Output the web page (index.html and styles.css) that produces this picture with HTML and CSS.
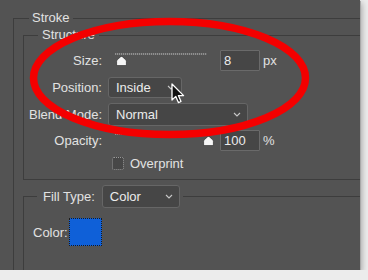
FILE: index.html
```html
<!DOCTYPE html>
<html lang="en">
<head>
    <meta charset="utf-8">
    <title>Layer Style - Stroke</title>
    <link rel="stylesheet" href="styles.css">
</head>
<body>
    <div class="window">
        <fieldset class="group group-stroke">
            <legend>Stroke</legend>
            <fieldset class="group group-structure">
                <legend>Structure</legend>
                <div class="row row-size">
                    <span class="row-label">Size:</span>
                    <div class="slider">
                        <div class="track"></div>
                        <svg class="thumb thumb-min" width="11" height="10" viewBox="0 0 11 10"><path d="M0.6 9.6 V5.4 Q0.6 4.5 1.4 3.7 L4.4 0.9 Q5.5 0 6.6 0.9 L9.6 3.7 Q10.4 4.5 10.4 5.4 V9.6 Z" fill="#f6f6f6" stroke="#2e2e2e" stroke-width="0.7"/></svg>
                    </div>
                    <div class="num">8</div>
                    <span class="unit">px</span>
                </div>
                <div class="row row-position">
                    <span class="row-label">Position:</span>
                    <div class="select select-short">
                        <span>Inside</span>
                        <svg class="chevron" width="8" height="5" viewBox="0 0 8 5"><path d="M1 1 L4 4 L7 1" fill="none" stroke="#c8c8c8" stroke-width="1.1"/></svg>
                    </div>
                </div>
                <div class="row row-blend">
                    <span class="row-label">Blend Mode:</span>
                    <div class="select select-wide">
                        <span>Normal</span>
                        <svg class="chevron" width="8" height="5" viewBox="0 0 8 5"><path d="M1 1 L4 4 L7 1" fill="none" stroke="#c8c8c8" stroke-width="1.1"/></svg>
                    </div>
                </div>
                <div class="row row-opacity">
                    <span class="row-label">Opacity:</span>
                    <div class="slider">
                        <div class="track"></div>
                        <svg class="thumb thumb-max" width="11" height="10" viewBox="0 0 11 10"><path d="M0.6 9.6 V5.4 Q0.6 4.5 1.4 3.7 L4.4 0.9 Q5.5 0 6.6 0.9 L9.6 3.7 Q10.4 4.5 10.4 5.4 V9.6 Z" fill="#f6f6f6" stroke="#2e2e2e" stroke-width="0.7"/></svg>
                    </div>
                    <div class="num">100</div>
                    <span class="unit">%</span>
                </div>
                <div class="row row-check">
                    <span class="row-label"></span>
                    <span class="checkbox"></span>
                    <span>Overprint</span>
                </div>
            </fieldset>
            <fieldset class="group group-fill">
                <legend>
                    <span class="legend-row">
                        <span>Fill Type:</span>
                        <span class="select select-fill">
                            <span>Color</span>
                            <svg class="chevron" width="8" height="5" viewBox="0 0 8 5"><path d="M1 1 L4 4 L7 1" fill="none" stroke="#c8c8c8" stroke-width="1.1"/></svg>
                        </span>
                    </span>
                </legend>
                <div class="row row-color">
                    <span class="color-label">Color:</span>
                    <span class="swatch"></span>
                </div>
            </fieldset>
        </fieldset>

        <!-- red marker drawn over the dialog -->
        <svg class="highlight" width="360" height="270" viewBox="0 0 360 270">
            <ellipse cx="169.5" cy="78" rx="136" ry="56.5" fill="none" stroke="#f40000" stroke-width="7.5"/>
        </svg>
        <svg class="cursor" width="15" height="22" viewBox="0 0 15 22">
            <path d="M1 1 L1 17 L4.8 13.4 L7.4 19.6 L10 18.5 L7.4 12.6 L12.6 12.6 Z" fill="#111" stroke="#fff" stroke-width="1.3" stroke-linejoin="round"/>
        </svg>
    </div>
</body>
</html>
```
FILE: styles.css
```css
* { box-sizing: border-box; }
body {
    margin: 0;
    background-color: #ececec;
    font-family: "Liberation Sans", Arial, Helvetica, sans-serif;
    font-size: 13px;
    color: #e2e2e2;
}
.window {
    position: relative;
    width: 360px;
    height: 270px;
    padding-top: 10px;
    background-color: #535353;
    overflow: hidden;
    box-shadow: 1px 1px 0 #a8a8a8, 2px 3px 6px rgba(0, 0, 0, 0.3);
}

/* group boxes */
.group {
    margin: 0;
    padding: 0;
    min-inline-size: 0;
    border: 1px solid #3d3d3d;
}
.group > legend {
    padding: 0 3px;
    line-height: 16px;
}
.group-stroke {
    margin-left: 13px;
    width: 400px;
    padding: 1px 0 0 9px;
}
.group-stroke > legend { margin-left: 6px; }
.group-structure { padding: 7px 0 9px 0; }
.group-structure > legend {
    margin-left: 14px;
    padding: 0 4px;
}
.group-fill {
    margin-top: 5px;
    padding: 10px 0 40px 9px;
}
.group-fill > legend {
    margin-left: 4px;
    padding: 0 3px 0 6px;
}
.legend-row {
    display: flex;
    align-items: center;
    gap: 7px;
}

/* rows */
.row {
    display: flex;
    align-items: center;
    height: 21px;
}
.row-position { margin-top: 6px; }
.row-blend { margin-top: 5px; height: 23px; }
.row-opacity { margin-top: 4px; }
.row-check { margin-top: 5px; height: 14px; }
.row-label {
    width: 78px;
    margin-right: 6px;
    text-align: right;
}

/* slider */
.slider {
    width: 106px;
    height: 21px;
    margin-right: 6px;
}
.track {
    width: 92px;
    height: 2px;
    margin: 3px 0 0 7px;
    background: repeating-linear-gradient(90deg, #8e8e8e 0 1px, #626262 1px 2px);
}
.thumb { display: block; margin-top: 1px; }
.thumb-min { margin-left: 8px; }
.thumb-max { margin-left: 95px; }

.num {
    width: 40px;
    height: 21px;
    padding-left: 3px;
    line-height: 19px;
    background-color: #464646;
    border: 1px solid #6a6a6a;
    border-radius: 1px;
    color: #ececec;
}
.unit { margin-left: 3px; }

/* dropdowns */
.select {
    display: flex;
    align-items: center;
    justify-content: space-between;
    padding: 0 6px 0 7px;
    background-color: #464646;
    border: 1px solid #666;
    border-radius: 3px;
    color: #ececec;
}
.select-short { width: 74px; height: 21px; }
.select-wide { width: 140px; height: 23px; }
.select-fill { width: 78px; height: 23px; }
.chevron { display: block; }

.checkbox {
    width: 12px;
    height: 13px;
    margin: 0 6px 0 4px;
    background-color: #474747;
    border: 1px dotted #9a9a9a;
    border-radius: 2px;
}

/* fill */
.row-color { height: 28px; }
.color-label { width: 36px; }
.swatch {
    width: 33px;
    height: 28px;
    background-color: #0f60d8;
    border: 1px dotted #1a1a1a;
}

/* overlays */
.highlight {
    position: absolute;
    top: 0;
    left: 0;
}
.cursor {
    position: absolute;
    left: 171px;
    top: 83px;
}
```
